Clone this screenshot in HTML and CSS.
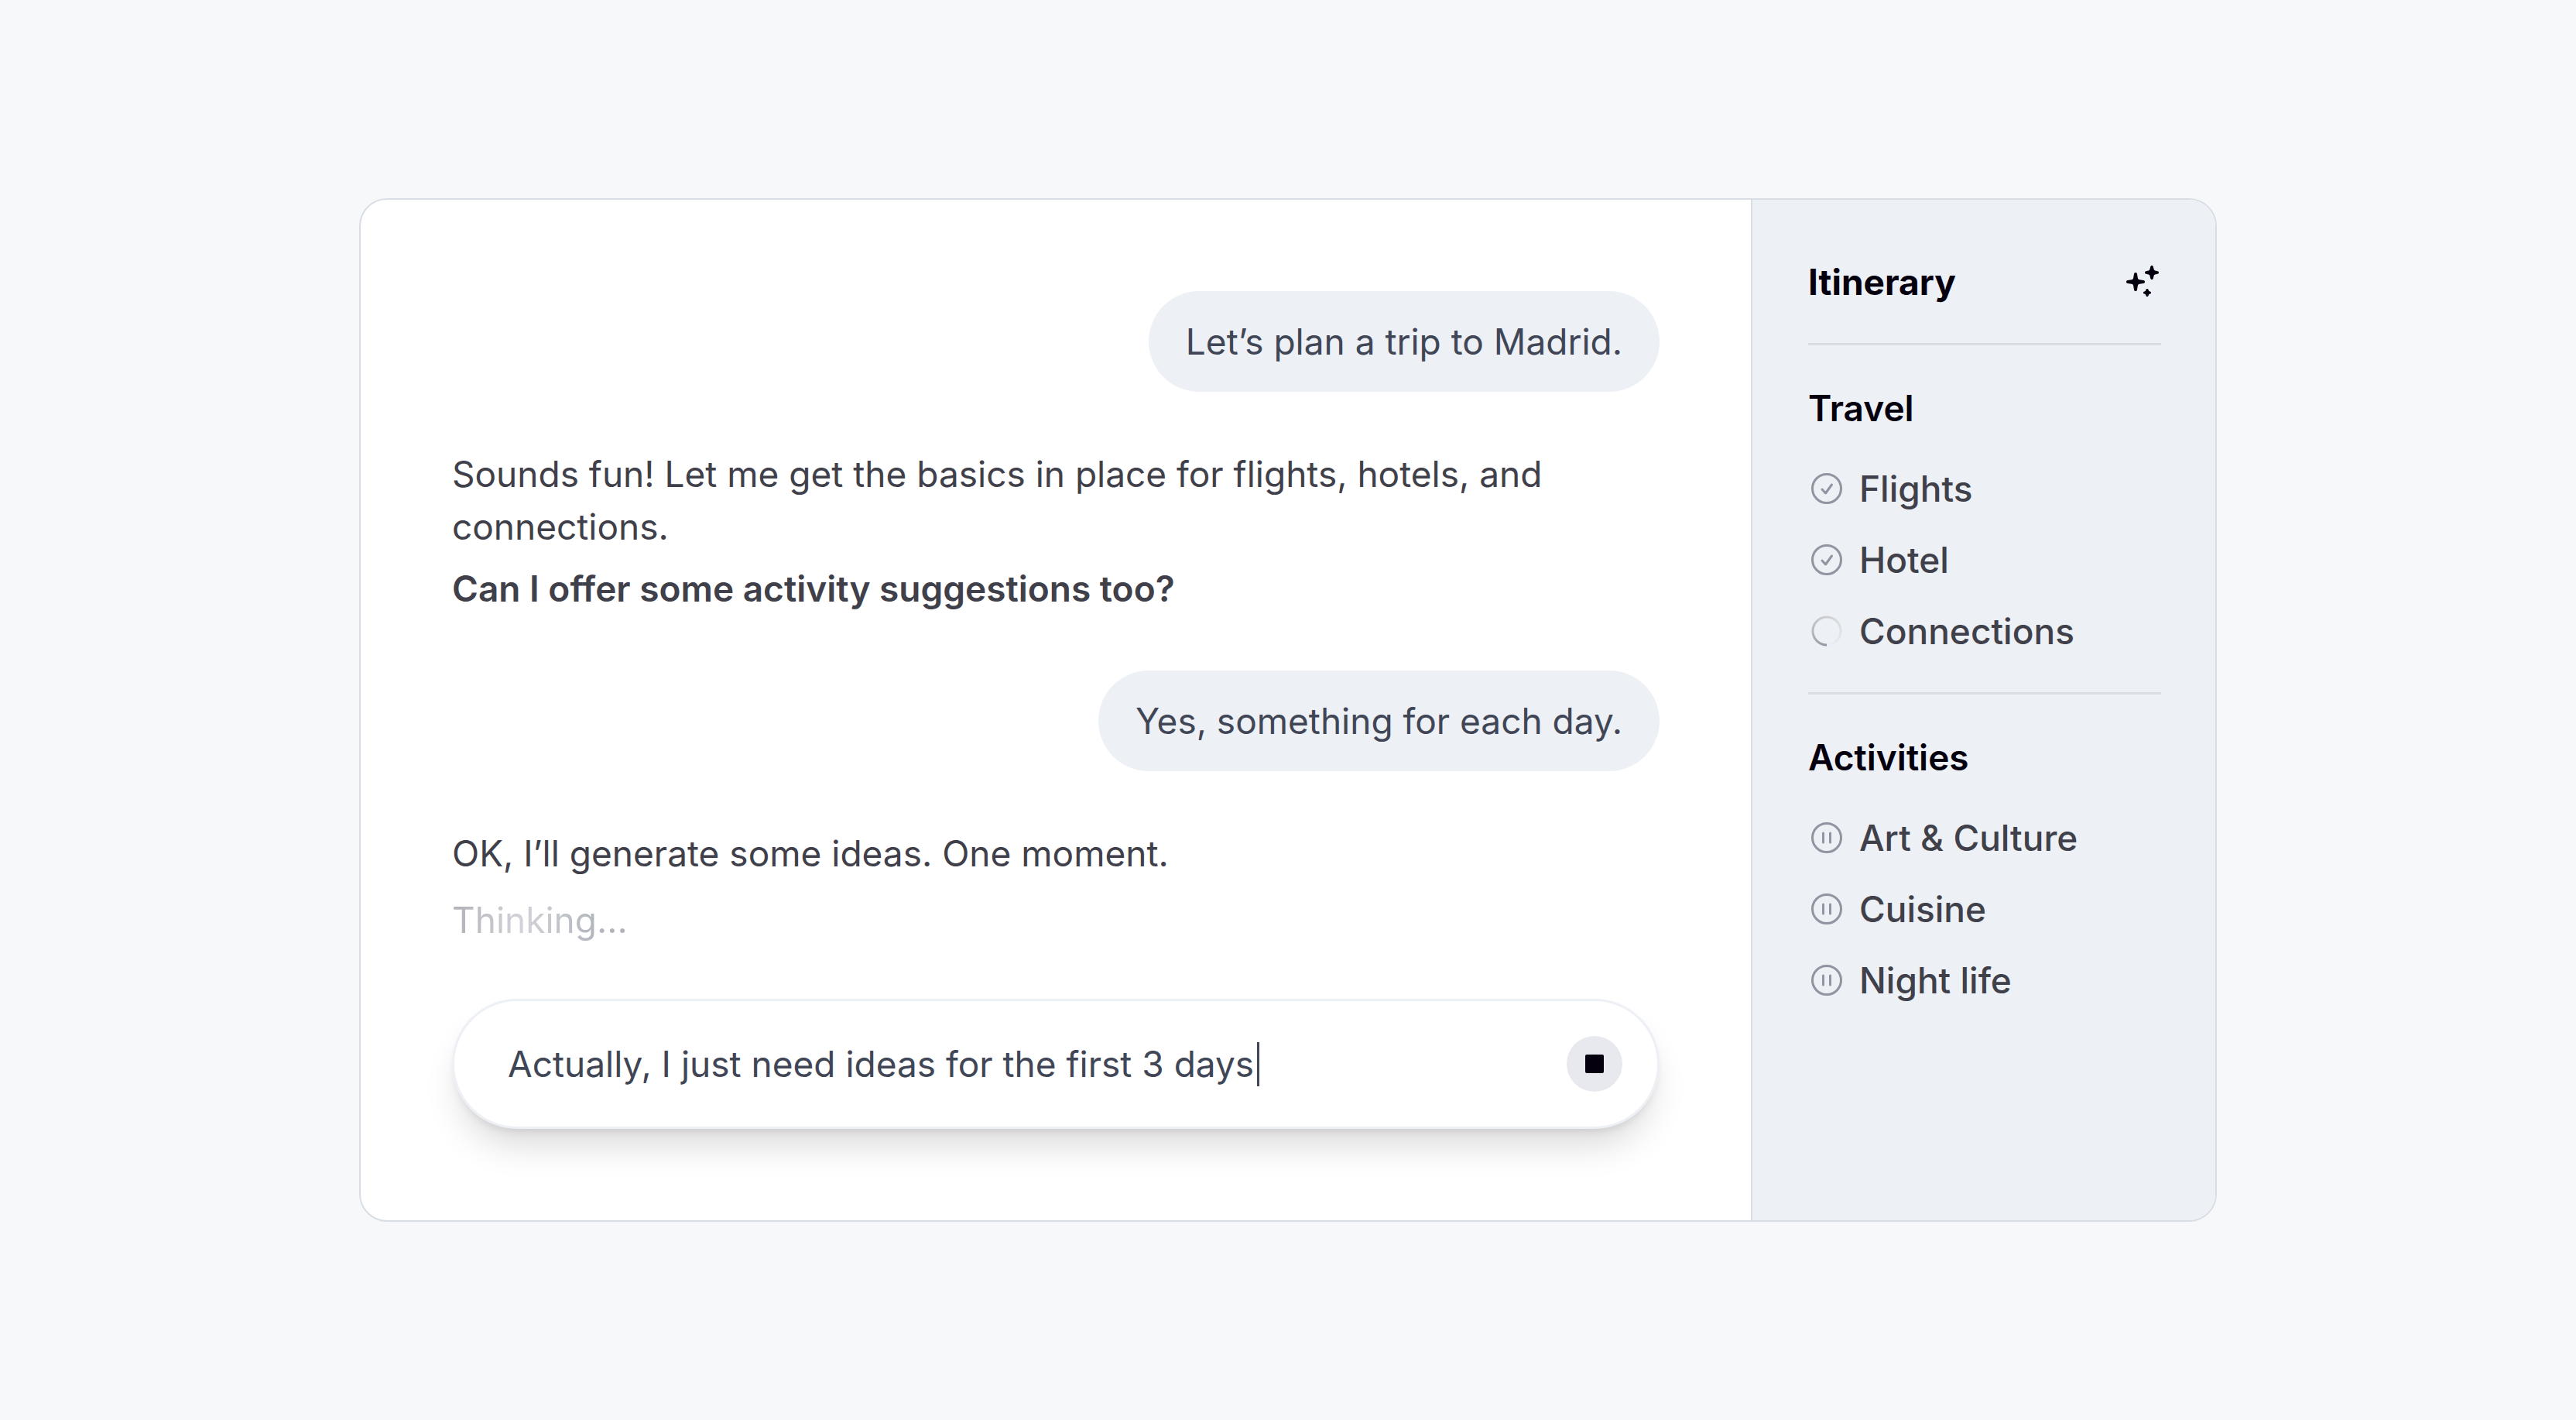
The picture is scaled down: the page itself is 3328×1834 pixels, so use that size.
FILE: index.html
```html
<!DOCTYPE html>
<html lang="en">
  <head>
    <meta charset="UTF-8" />
    <meta name="viewport" content="width=device-width, initial-scale=1.0" />
    <title>Trip planner</title>
    <link rel="stylesheet" href="styles.css">
  </head>
  <body>
    <div class="planner">
      <main class="chat">
        <p class="bubble">Let’s plan a trip to Madrid.</p>

        <div class="reply">
          <p>
            Sounds fun! Let me get the basics in place for flights, hotels, and
            connections.
          </p>
          <p class="question">Can I offer some activity suggestions too?</p>
        </div>

        <p class="bubble">Yes, something for each day.</p>

        <div class="reply reply-pending">
          <p>OK, I’ll generate some ideas. One moment.</p>
          <p class="thinking">Thinking...</p>
        </div>

        <form class="composer">
          <input class="composer-input" type="text" aria-label="Message" value="Actually, I just need ideas for the first 3 days" />
          <span class="caret"></span>
          <button class="stop" type="button" aria-label="Stop"><span class="stop-icon"></span></button>
        </form>
      </main>

      <aside class="sidebar">
        <header class="sidebar-header">
          <h1>Itinerary</h1>
          <svg class="icon" viewBox="0 0 48 48" fill="currentColor" aria-hidden="true">
            <path d="M15 12c1.200 0 1.900.8 2 1.800l.8 5c.2 1.400 1 2.200 2.400 2.400l5 .8c1 .1 1.800.8 1.800 2s-.8 1.900-1.800 2l-5 .8c-1.400.2-2.200 1-2.400 2.400l-.8 5c-.1 1-.8 1.800-2 1.800s-1.900-.8-2-1.800l-.8-5c-.2-1.400-1-2.200-2.400-2.400l-5-.8c-1-.1-1.800-.8-1.800-2s.8-1.900 1.800-2l5-.8c1.400-.2 2.200-1 2.400-2.400l.8-5c.1-1 .8-1.800 2-1.800z" />
            <path d="M36 3c1 0 1.600.6 1.800 1.500l.8 3.200c.2.900.8 1.500 1.700 1.700l3.200.8c.9.200 1.500.8 1.500 1.800s-.6 1.600-1.500 1.800l-3.200.8c-.9.200-1.500.8-1.700 1.700l-.8 3.200c-.2.900-.8 1.500-1.800 1.500s-1.600-.6-1.800-1.500l-.8-3.200c-.2-.9-.8-1.500-1.700-1.700l-3.200-.8c-.9-.2-1.500-.8-1.500-1.800s.6-1.600 1.500-1.800l3.200-.8c.9-.2 1.500-.8 1.700-1.700l.8-3.200c.2-.9.8-1.500 1.800-1.500z" />
            <path d="M30 33c.8 0 1.400.5 1.600 1.300l.2.700c.2.700.5 1 1.200 1.200l.7.200c.8.200 1.300.8 1.300 1.600s-.5 1.400-1.300 1.600l-.7.200c-.7.200-1 .5-1.200 1.200l-.2.700c-.2.800-.8 1.300-1.600 1.300s-1.400-.5-1.600-1.300l-.2-.7c-.2-.7-.5-1-1.200-1.200l-.7-.2c-.8-.2-1.300-.8-1.300-1.600s.5-1.400 1.300-1.600l.7-.2c.7-.2 1-.5 1.200-1.200l.2-.7c.2-.8.8-1.300 1.600-1.300z" />
          </svg>
        </header>

        <section class="group">
          <h2>Travel</h2>
          <ul>
            <li>
              <svg class="icon status" viewBox="0 0 48 48" aria-hidden="true">
                <circle cx="24" cy="24" r="18.500" />
                <path d="M18 25l4.500 5 8-11" />
              </svg>
              Flights
            </li>
            <li>
              <svg class="icon status" viewBox="0 0 48 48" aria-hidden="true">
                <circle cx="24" cy="24" r="18.500" />
                <path d="M18 25l4.500 5 8-11" />
              </svg>
              Hotel
            </li>
            <li>
              <span class="icon spinner"></span>
              Connections
            </li>
          </ul>
        </section>

        <section class="group">
          <h2>Activities</h2>
          <ul>
            <li>
              <svg class="icon status" viewBox="0 0 48 48" aria-hidden="true">
                <circle cx="24" cy="24" r="18.500" />
                <path d="M19.500 18v12M28.500 18v12" />
              </svg>
              Art &amp; Culture
            </li>
            <li>
              <svg class="icon status" viewBox="0 0 48 48" aria-hidden="true">
                <circle cx="24" cy="24" r="18.500" />
                <path d="M19.500 18v12M28.500 18v12" />
              </svg>
              Cuisine
            </li>
            <li>
              <svg class="icon status" viewBox="0 0 48 48" aria-hidden="true">
                <circle cx="24" cy="24" r="18.500" />
                <path d="M19.500 18v12M28.500 18v12" />
              </svg>
              Night life
            </li>
          </ul>
        </section>
      </aside>
    </div>
  </body>
</html>
```
FILE: styles.css
```css
* {
  box-sizing: border-box;
}

body {
  margin: 0;
  min-height: 100vh;
  display: flex;
  align-items: center;
  justify-content: center;
  background: #f7f8fa;
  font-family: Inter, "Liberation Sans", sans-serif;
  font-size: 46px;
  line-height: 68px;
  color: #40404a;
}

h1,
h2,
p,
ul {
  margin: 0;
  padding: 0;
}

.planner {
  display: flex;
  width: 100%;
  max-width: 2400px;
  border: 2px solid #d9dde4;
  border-radius: 36px;
  overflow: hidden;
  background: #fff;
}

.chat {
  flex: 1;
  min-width: 0;
  display: flex;
  flex-direction: column;
  padding: 118px;
}

.bubble {
  align-self: flex-end;
  padding: 31px 48px;
  border-radius: 65px;
  background: #edf0f5;
  color: #404656;
}

.reply {
  display: flex;
  flex-direction: column;
  align-items: flex-start;
  gap: 12px;
  margin: 72px 0;
}

.question {
  font-weight: 600;
}

.reply-pending {
  gap: 18px;
  margin-bottom: 68px;
}

.thinking {
  background: linear-gradient(90deg, #b0b2b8, #d2d3d9 40%, #b4b7be 80%, #b0b2b8);
  background-clip: text;
  color: transparent;
}

.composer {
  display: flex;
  align-items: center;
  height: 168px;
  padding: 0 45px 0 69px;
  border: 3px solid #edf0f5;
  border-radius: 84px;
  background: #fff;
  box-shadow: 0 6px 12px -4px rgba(0, 0, 0, 0.1), 0 30px 48px -12px rgba(0, 0, 0, 0.16);
}

.composer-input {
  field-sizing: content;
  min-width: 0;
  padding: 0;
  border: 0;
  outline: 0;
  background: none;
  font: inherit;
  color: #404656;
}

.caret {
  width: 3px;
  height: 57px;
  margin-left: 4px;
  background: #404656;
}

.stop {
  display: flex;
  align-items: center;
  justify-content: center;
  width: 72px;
  height: 72px;
  margin-left: auto;
  padding: 0;
  border: 0;
  border-radius: 50%;
  background: #e7e9ef;
}

.stop-icon {
  width: 24px;
  height: 24px;
  border-radius: 2px;
  background: #04000d;
}

.sidebar {
  width: 600px;
  padding: 72px 70px 70px 72px;
  border-left: 2px solid #d9dde4;
  background: #edf0f5;
  font-weight: 500;
}

.sidebar-header {
  display: flex;
  align-items: center;
  justify-content: space-between;
}

h1,
h2 {
  font-size: 46px;
  font-weight: 600;
  color: #04000d;
}

h1 {
  font-weight: 700;
}

.icon {
  flex: none;
  width: 48px;
  height: 48px;
}

.sidebar-header .icon {
  color: #04000d;
}

.group {
  margin-top: 45px;
  padding-top: 47px;
  border-top: 3px solid #d9dde4;
}

.group ul {
  display: flex;
  flex-direction: column;
  gap: 24px;
  margin-top: 36px;
  list-style: none;
}

.group li {
  display: flex;
  align-items: center;
  gap: 18px;
}

.status {
  fill: none;
  stroke: #9194a1;
  stroke-width: 3;
  stroke-linecap: round;
  stroke-linejoin: round;
}

.spinner {
  background: conic-gradient(from 180deg, #9194a1, #b8babf 25%, #d9dbdf 65%, #edf0f5);
  mask: radial-gradient(circle, transparent 16px, #000 17px, #000 19px, transparent 20px);
}
```
